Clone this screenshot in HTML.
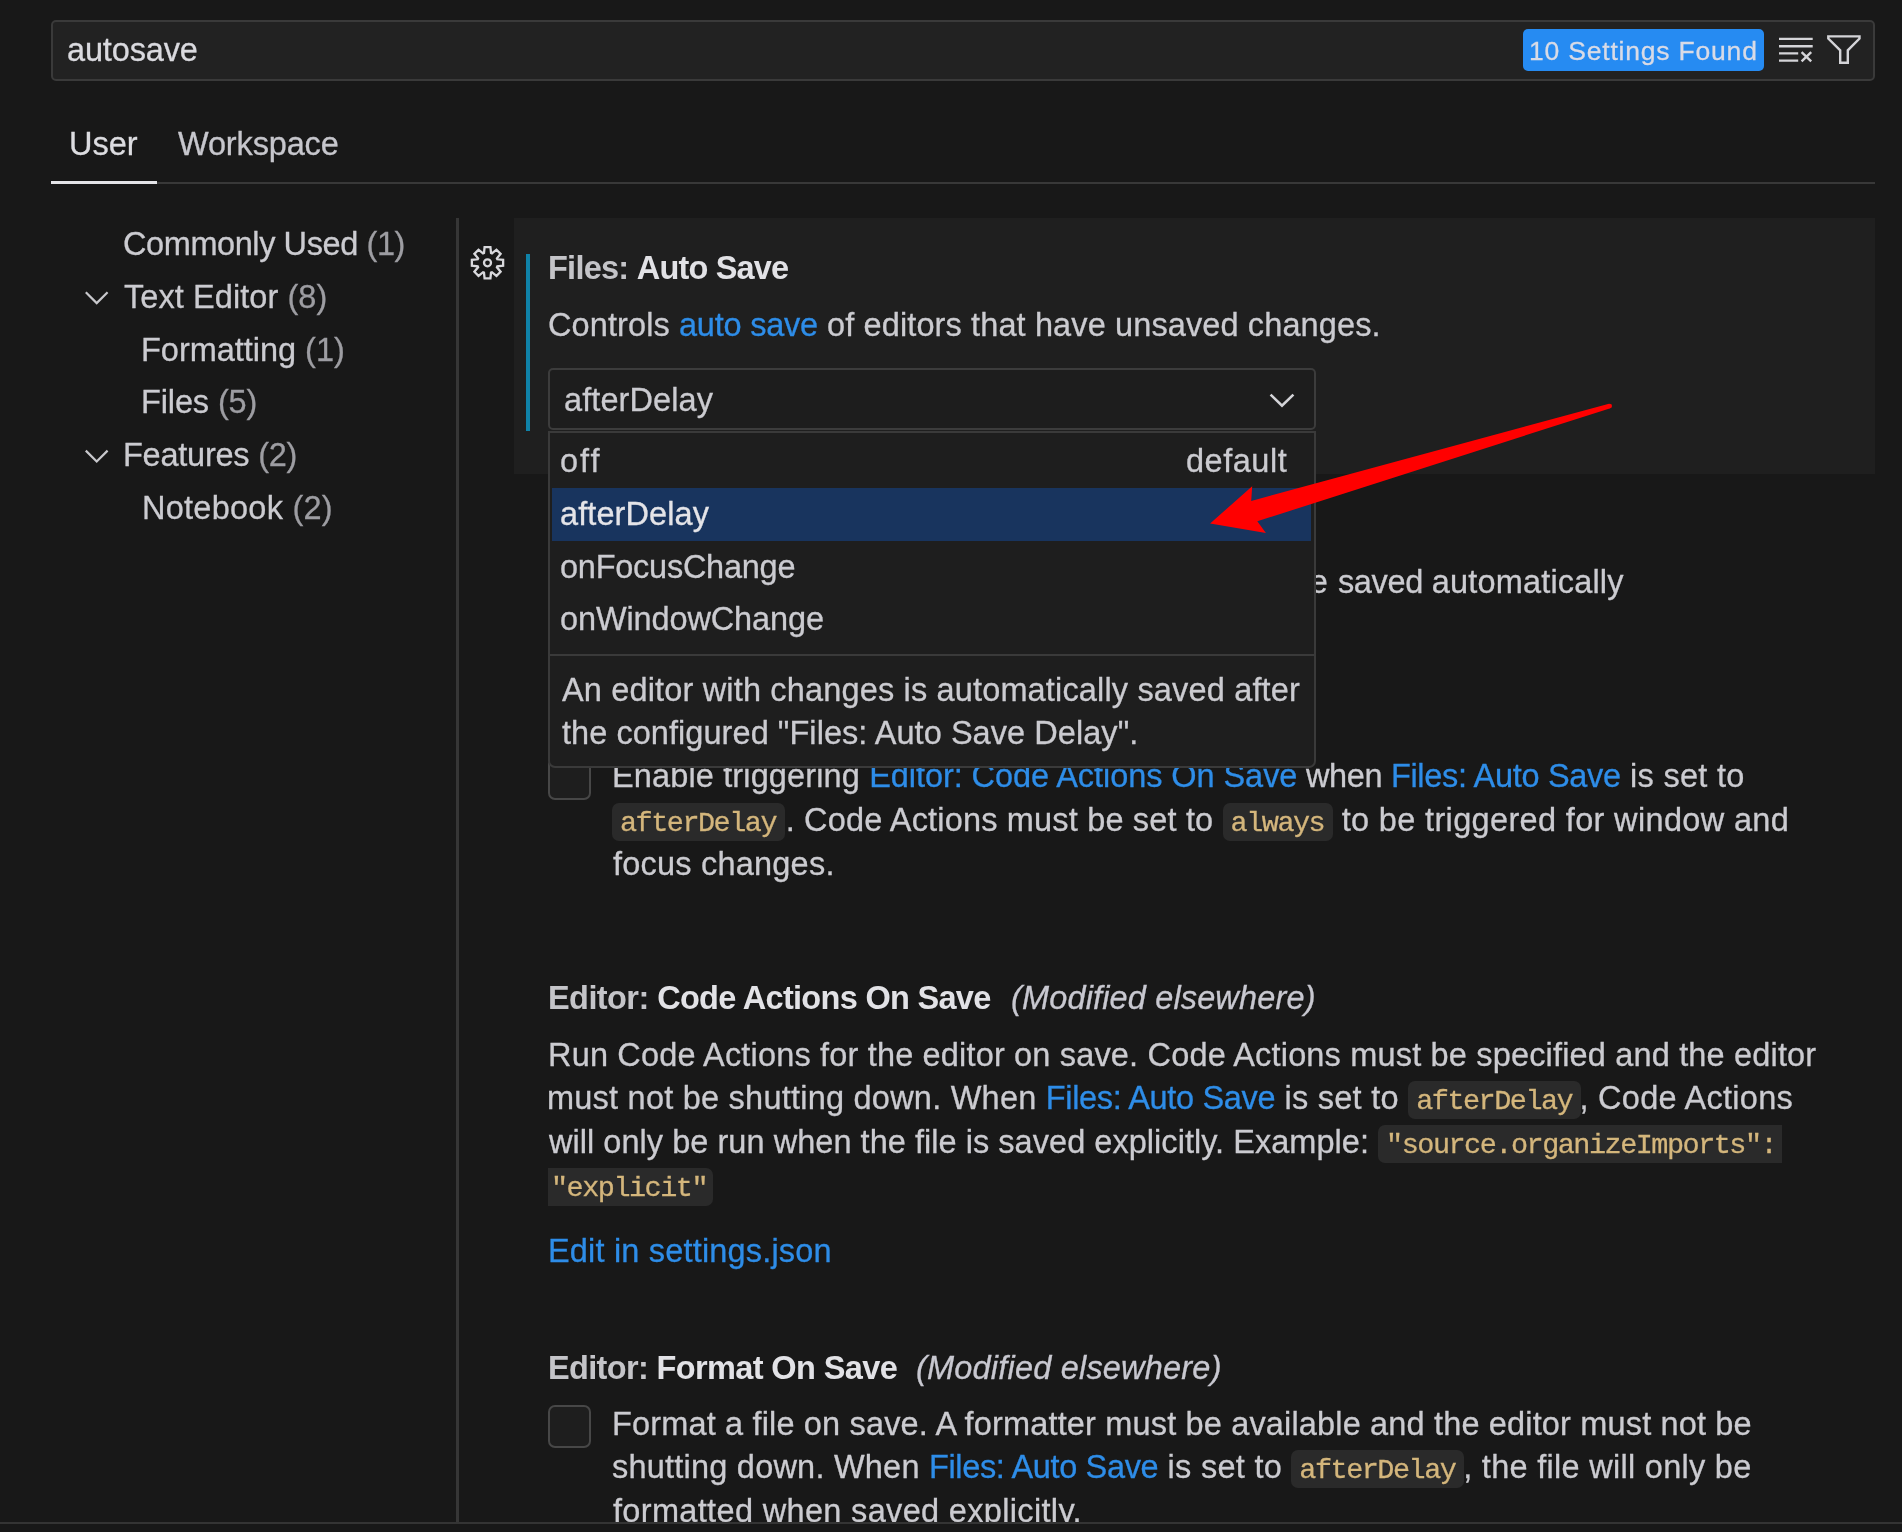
<!DOCTYPE html>
<html><head><meta charset="utf-8"><title>Settings</title><style>
html,body{margin:0;padding:0;background:#181818;}
body{width:1902px;height:1532px;position:relative;font-family:"Liberation Sans",sans-serif;color:#cbcbd0;-webkit-text-stroke:0.3px;}
.t{position:absolute;white-space:pre;will-change:transform;}
.b{font-weight:bold;color:#e2e2e6;-webkit-text-stroke:0;}
.cat{color:#c4c4c8;}
.it{font-style:italic;}
.lk{color:#2e8de8;}
.dim{color:#9d9da2;}
.cd{font-family:"Liberation Mono",monospace;font-size:28.5px;color:#d4b67c;background:#2a2a2a;border-radius:7px;padding:4px 8.8px 1px 8px;letter-spacing:-1.5px;-webkit-text-stroke:0.3px #d4b67c;}
.cdl{border-radius:7px 0 0 7px;padding-right:5.8px;}
.cdr{border-radius:0 7px 7px 0;padding-left:3px;padding-right:6px;}
.box{position:absolute;box-sizing:border-box;}
#root{position:absolute;left:0;top:0;width:1902px;height:1532px;overflow:hidden;contain:strict;}
</style></head><body><div id="root">
<div class="box" style="left:51px;top:20px;width:1824px;height:61px;border:2px solid #3a3a3a;border-radius:5px;background:#222222;"></div>
<div class="box" style="left:1523px;top:29px;width:241px;height:42px;border-radius:5px;background:#268bf2;"></div>
<div class="box" style="left:51px;top:182px;width:1824px;height:2px;background:#383838;"></div>
<div class="box" style="left:51px;top:181px;width:106px;height:3px;background:#e4e4e8;"></div>
<div class="box" style="left:456px;top:218px;width:3px;height:1304px;background:#363636;"></div>
<div class="box" style="left:514px;top:218px;width:1361px;height:256px;background:#1f1f1f;"></div>
<div class="box" style="left:526px;top:254px;width:4px;height:177px;background:#0f82a8;"></div>
<div class="box" style="left:548px;top:368px;width:768px;height:62px;border:2px solid #3c3c3c;border-radius:5px;background:#1d1d1d;"></div>
<div class="box" style="left:548px;top:757px;width:43px;height:43px;border:2px solid #474747;border-radius:7px;background:#1e1e1e;"></div>
<div class="box" style="left:548px;top:1405px;width:43px;height:43px;border:2px solid #474747;border-radius:7px;background:#1e1e1e;"></div>
<svg class="box" style="left:0;top:0" width="1902" height="1532" viewBox="0 0 1902 1532" fill="none" stroke="#d4d4d8" stroke-width="2.4">
<path d="M1779 38.9H1812.7M1779 46.2H1812.7M1779 53.4H1798.2M1779 60.6H1798.2"/>
<path d="M1801.6 52.1L1811.2 61.4M1811.2 52.1L1801.6 61.4"/>
<path d="M1828.3 36.4H1859.5V38.6L1847.8 50.3V62.8H1840.2V50.3L1828.3 38.6Z" stroke-linejoin="miter"/>
<path d="M85.8 292.2L96.7 303.1L107.6 292.2" stroke="#c8c8cc" stroke-width="2.2"/>
<path d="M85.8 450.6L96.7 461.5L107.6 450.6" stroke="#c8c8cc" stroke-width="2.2"/>
<path d="M1270.6 394.6L1282 405.8L1293.4 394.6" stroke="#d4d4d8" stroke-width="2.6"/>
<path d="M483.98 253.01L484.58 247.17L490.42 247.17L491.02 253.01L491.93 253.39L496.48 249.68L500.62 253.82L496.91 258.37L497.29 259.28L503.13 259.88L503.13 265.72L497.29 266.32L496.91 267.23L500.62 271.78L496.48 275.92L491.93 272.21L491.02 272.59L490.42 278.43L484.58 278.43L483.98 272.59L483.07 272.21L478.52 275.92L474.38 271.78L478.09 267.23L477.71 266.32L471.87 265.72L471.87 259.88L477.71 259.28L478.09 258.37L474.38 253.82L478.52 249.68L483.07 253.39Z" stroke="#d8d8dc" stroke-width="2.3" stroke-linejoin="miter"/><circle cx="487.5" cy="262.8" r="3.5" stroke="#d8d8dc" stroke-width="2.3"/>
</svg>
<div id="search" class="t " style="left:67.00px;top:28px;font-size:32.5px;line-height:44px;height:44px;color:#dadadf;"><span id="search_0" class="sg" style="letter-spacing:-0.143px;">autosave</span></div>
<div id="badge" class="t " style="left:1529.40px;top:33px;font-size:26.5px;line-height:36px;height:36px;color:#d9dbe6;"><span id="badge_0" class="sg" style="letter-spacing:0.800px;">10 Settings Found</span></div>
<div id="tab1" class="t " style="left:69.20px;top:122px;font-size:32.5px;line-height:44px;height:44px;color:#dcdce0;"><span id="tab1_0" class="sg">User</span></div>
<div id="tab2" class="t " style="left:177.70px;top:122px;font-size:32.5px;line-height:44px;height:44px;color:#c6c6cc;"><span id="tab2_0" class="sg" style="letter-spacing:-0.150px;">Workspace</span></div>
<div id="toc1" class="t " style="left:123.40px;top:222px;font-size:32.5px;line-height:44px;height:44px;"><span id="toc1_0" class="sg" style="letter-spacing:-0.413px;">Commonly Used </span><span id="toc1_1" class="sg dim" style="letter-spacing:-0.413px;">(1)</span></div>
<div id="toc2" class="t " style="left:124.20px;top:275px;font-size:32.5px;line-height:44px;height:44px;"><span id="toc2_0" class="sg" style="letter-spacing:0.071px;">Text Editor </span><span id="toc2_1" class="sg dim" style="letter-spacing:0.071px;">(8)</span></div>
<div id="toc3" class="t " style="left:141.00px;top:328px;font-size:32.5px;line-height:44px;height:44px;"><span id="toc3_0" class="sg" style="letter-spacing:-0.023px;">Formatting </span><span id="toc3_1" class="sg dim" style="letter-spacing:-0.023px;">(1)</span></div>
<div id="toc4" class="t " style="left:141.00px;top:380px;font-size:32.5px;line-height:44px;height:44px;"><span id="toc4_0" class="sg" style="letter-spacing:-0.125px;">Files </span><span id="toc4_1" class="sg dim" style="letter-spacing:-0.125px;">(5)</span></div>
<div id="toc5" class="t " style="left:123.00px;top:433px;font-size:32.5px;line-height:44px;height:44px;"><span id="toc5_0" class="sg" style="letter-spacing:-0.236px;">Features </span><span id="toc5_1" class="sg dim" style="letter-spacing:-0.236px;">(2)</span></div>
<div id="toc6" class="t " style="left:141.60px;top:486px;font-size:32.5px;line-height:44px;height:44px;"><span id="toc6_0" class="sg" style="letter-spacing:0.255px;">Notebook </span><span id="toc6_1" class="sg dim" style="letter-spacing:0.255px;">(2)</span></div>
<div id="s1t" class="t b" style="left:548.10px;top:246px;font-size:32.5px;line-height:44px;height:44px;"><span id="s1t_0" class="sg cat" style="letter-spacing:-0.743px;">Files: </span><span id="s1t_1" class="sg" style="letter-spacing:-0.812px;">Auto Save</span></div>
<div id="s1d" class="t " style="left:547.80px;top:303px;font-size:32.5px;line-height:44px;height:44px;"><span id="s1d_0" class="sg" style="letter-spacing:0.100px;">Controls </span><span id="s1d_1" class="sg lk" style="letter-spacing:-0.222px;">auto save</span><span id="s1d_2" class="sg" style="letter-spacing:0.119px;"> of editors that have unsaved changes.</span></div>
<div id="sel" class="t " style="left:563.80px;top:378px;font-size:32.5px;line-height:44px;height:44px;"><span id="sel_0" class="sg" style="letter-spacing:0.089px;">afterDelay</span></div>
<div id="hid" class="t " style="left:1099.00px;top:560px;font-size:32.5px;line-height:44px;height:44px;"><span id="hid_0" class="sg" style="letter-spacing:0.479px;">changes will be </span><span id="hid_1" class="sg" style="letter-spacing:-0.317px;">saved </span><span id="hid_2" class="sg" style="letter-spacing:0.167px;">automatically</span></div>
<div id="s2l1" class="t " style="left:612.00px;top:754px;font-size:32.5px;line-height:44px;height:44px;"><span id="s2l1_0" class="sg" style="letter-spacing:0.133px;">Enable triggering </span><span id="s2l1_1" class="sg lk" style="letter-spacing:-0.064px;">Editor: Code Actions On Save</span><span id="s2l1_2" class="sg" style="letter-spacing:-0.367px;"> when </span><span id="s2l1_3" class="sg lk" style="letter-spacing:-0.312px;">Files: Auto Save</span><span id="s2l1_4" class="sg" style="letter-spacing:0.289px;"> is set to</span></div>
<div id="s2l2" class="t " style="left:612.30px;top:798px;font-size:32.5px;line-height:44px;height:44px;"><span id="s2l2_0" class="sg cd">afterDelay</span><span id="s2l2_1" class="sg" style="letter-spacing:0.173px;margin-left:0.80px;">. Code Actions must be set to </span><span id="s2l2_2" class="sg cd">always</span><span id="s2l2_3" class="sg" style="letter-spacing:0.343px;margin-left:-0.70px;"> to be triggered for window and</span></div>
<div id="s2l3" class="t " style="left:613.20px;top:842px;font-size:32.5px;line-height:44px;height:44px;"><span id="s2l3_0" class="sg" style="letter-spacing:0.215px;">focus changes.</span></div>
<div id="s3t" class="t b" style="left:547.80px;top:976px;font-size:32.5px;line-height:44px;height:44px;"><span id="s3t_0" class="sg cat" style="letter-spacing:-0.575px;">Editor: </span><span id="s3t_1" class="sg" style="letter-spacing:-0.695px;">Code Actions On Save</span></div>
<div id="s3m" class="t it" style="left:1011.10px;top:976px;font-size:32.5px;line-height:44px;height:44px;color:#c8c8d0;"><span id="s3m_0" class="sg" style="letter-spacing:0.147px;">(Modified elsewhere)</span></div>
<div id="s3l1" class="t " style="left:547.80px;top:1033px;font-size:32.5px;line-height:44px;height:44px;"><span id="s3l1_0" class="sg" style="letter-spacing:0.169px;">Run Code Actions for the editor on save. Code Actions must be specified and the editor</span></div>
<div id="s3l2" class="t " style="left:547.40px;top:1076px;font-size:32.5px;line-height:44px;height:44px;"><span id="s3l2_0" class="sg" style="letter-spacing:0.231px;">must not be shutting down. When </span><span id="s3l2_1" class="sg lk" style="letter-spacing:-0.344px;">Files: Auto Save</span><span id="s3l2_2" class="sg" style="letter-spacing:0.273px;"> is set to </span><span id="s3l2_3" class="sg cd">afterDelay</span><span id="s3l2_4" class="sg" style="letter-spacing:0.292px;margin-left:-1.60px;">, Code Actions</span></div>
<div id="s3l3" class="t " style="left:548.60px;top:1120px;font-size:32.5px;line-height:44px;height:44px;"><span id="s3l3_0" class="sg" style="letter-spacing:0.039px;">will only be run when the file is saved explicitly. Example: </span><span id="s3l3_1" class="sg cd cdl">"source.organizeImports":</span></div>
<div id="s3l4" class="t " style="left:548.10px;top:1163px;font-size:32.5px;line-height:44px;height:44px;"><span id="s3l4_0" class="sg cd cdr">"explicit"</span></div>
<div id="s3e" class="t " style="left:547.80px;top:1229px;font-size:32.5px;line-height:44px;height:44px;"><span id="s3e_0" class="sg lk" style="letter-spacing:0.180px;">Edit in settings.json</span></div>
<div id="s4t" class="t b" style="left:547.80px;top:1346px;font-size:32.5px;line-height:44px;height:44px;"><span id="s4t_0" class="sg cat" style="letter-spacing:-0.663px;">Editor: </span><span id="s4t_1" class="sg" style="letter-spacing:-0.608px;">Format On Save</span></div>
<div id="s4m" class="t it" style="left:916.30px;top:1346px;font-size:32.5px;line-height:44px;height:44px;color:#c8c8d0;"><span id="s4m_0" class="sg" style="letter-spacing:0.200px;">(Modified elsewhere)</span></div>
<div id="s4l1" class="t " style="left:612.40px;top:1402px;font-size:32.5px;line-height:44px;height:44px;"><span id="s4l1_0" class="sg" style="letter-spacing:0.159px;">Format a file on save. A formatter must be available and the editor must not be</span></div>
<div id="s4l2" class="t " style="left:612.20px;top:1445px;font-size:32.5px;line-height:44px;height:44px;"><span id="s4l2_0" class="sg" style="letter-spacing:0.220px;">shutting down. When </span><span id="s4l2_1" class="sg lk" style="letter-spacing:-0.344px;">Files: Auto Save</span><span id="s4l2_2" class="sg" style="letter-spacing:0.273px;"> is set to </span><span id="s4l2_3" class="sg cd">afterDelay</span><span id="s4l2_4" class="sg" style="letter-spacing:0.286px;margin-left:-1.00px;">, the file will only be</span></div>
<div id="s4l3" class="t " style="left:613.20px;top:1489px;font-size:32.5px;line-height:44px;height:44px;"><span id="s4l3_0" class="sg" style="letter-spacing:0.335px;">formatted when saved explicitly.</span></div>
<div class="box" style="left:548px;top:431px;width:768px;height:337px;border:2px solid #3a3a3a;border-radius:0 0 7px 7px;background:#1e1e1e;"></div>
<div class="box" style="left:552px;top:488px;width:759px;height:53px;background:#18345e;"></div>
<div class="box" style="left:550px;top:654px;width:764px;height:2px;background:#3a3a3a;"></div>
<div id="d1" class="t " style="left:560.20px;top:439px;font-size:32.5px;line-height:44px;height:44px;"><span id="d1_0" class="sg" style="letter-spacing:2.000px;">off</span></div>
<div id="d1b" class="t " style="left:1185.80px;top:439px;font-size:32.5px;line-height:44px;height:44px;"><span id="d1b_0" class="sg" style="letter-spacing:0.517px;">default</span></div>
<div id="d2" class="t " style="left:560.00px;top:492px;font-size:32.5px;line-height:44px;height:44px;color:#e4e4e8;"><span id="d2_0" class="sg" style="letter-spacing:0.089px;">afterDelay</span></div>
<div id="d3" class="t " style="left:560.40px;top:545px;font-size:32.5px;line-height:44px;height:44px;"><span id="d3_0" class="sg" style="letter-spacing:-0.250px;">onFocusChange</span></div>
<div id="d4" class="t " style="left:560.40px;top:597px;font-size:32.5px;line-height:44px;height:44px;"><span id="d4_0" class="sg" style="letter-spacing:-0.123px;">onWindowChange</span></div>
<div id="d5" class="t " style="left:562.40px;top:668px;font-size:32.5px;line-height:44px;height:44px;"><span id="d5_0" class="sg" style="letter-spacing:0.160px;">An editor with changes is automatically saved after</span></div>
<div id="d6" class="t " style="left:562.30px;top:711px;font-size:32.5px;line-height:44px;height:44px;"><span id="d6_0" class="sg" style="letter-spacing:0.056px;">the configured "Files: Auto Save Delay".</span></div>
<svg class="box" style="left:0;top:0" width="1902" height="1532" viewBox="0 0 1902 1532">
<path d="M1251.2 500.9 L1609 403.8 L1610.4 408.2 L1257.3 521.2 L1265.9 533 L1210.1 523.6 L1252.2 486.3 Z" fill="#ff0000"/>
<circle cx="1609.7" cy="406" r="2.3" fill="#ff0000"/>
</svg>
<div class="box" style="left:0;top:1522px;width:1902px;height:10px;background:#181818;border-top:2px solid #343434;"></div>
</div></body></html>
